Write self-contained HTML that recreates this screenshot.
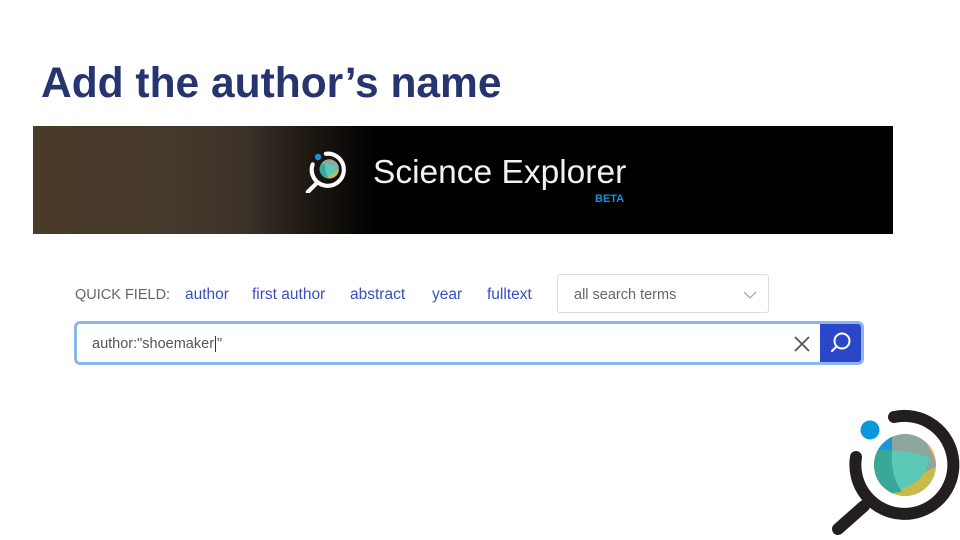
<!DOCTYPE html>
<html><head><meta charset="utf-8"><style>
body{margin:0;width:960px;height:540px;background:#fff;position:relative;overflow:hidden;font-family:"Liberation Sans",sans-serif}
.t{position:absolute;left:41px;top:60px;font-size:42.5px;font-weight:bold;color:#263570;white-space:nowrap}
.banner{position:absolute;left:33px;top:126px;width:860px;height:108px;background:linear-gradient(90deg,#4a3a28 0%,#463a2c 15%,#3a3128 25%,#1a1510 33%,#000 40%,#000 100%)}
.st{position:absolute;left:373px;top:154px;color:#f2f2f2;font-size:33.5px;white-space:nowrap}
.beta{position:absolute;left:595px;top:193px;color:#1a8fe0;font-size:11px;font-weight:bold}
.qf{position:absolute;top:286px;font-size:14.5px;white-space:nowrap}
.lbl{left:75px;color:#666;top:287px}
.lk{color:#3a4fc0;font-size:15.5px}
.sel{position:absolute;left:557px;top:274px;width:212px;height:39px;border:1px solid #ddd;border-radius:3px;box-sizing:border-box}
.sel span{position:absolute;left:16px;top:12px;font-size:14.5px;color:#666}
.inp{position:absolute;left:74px;top:321px;width:790px;height:44px;border:3px solid #8bb8ec;border-radius:6px;box-sizing:border-box;background:#fff}
.inp span{position:absolute;left:15px;top:12px;font-size:14.5px;color:#555}
.btn{position:absolute;right:0;top:0;width:41px;height:38px;background:#2b46c8;border-radius:0 3px 3px 0}
</style></head><body>
<div class="t">Add the author’s name</div>
<div class="banner"></div>
<svg style="position:absolute;left:302px;top:148px" width="45" height="45" viewBox="0 0 140 140">
<defs><clipPath id="g2"><circle cx="85" cy="65" r="30"/></clipPath></defs>
<g clip-path="url(#g2)">
<rect x="50" y="30" width="80" height="80" fill="#8ea6a0"/>
<path d="M105 40 L125 40 L125 80 Z" fill="#f2a455"/>
<path d="M125 62 L125 110 L70 110 L70 90 Z" fill="#c8bb4c"/>
<path d="M55 55 Q75 45 110 58 Q105 80 85 88 Q60 95 55 80Z" fill="#5cc8b6"/>
<path d="M50 52 Q62 48 72 50 Q70 75 82 92 L50 95Z" fill="#3aa898"/>
</g>
<path d="M74 18 A50 50 0 1 1 33 51" fill="none" stroke="#fff" stroke-width="13" stroke-linecap="round"/>
<line x1="18" y1="137" x2="44" y2="111" stroke="#fff" stroke-width="13" stroke-linecap="round"/>
<circle cx="50" cy="28" r="10" fill="#1a8fe0"/>
</svg>
<div class="st">Science Explorer</div>
<div class="beta">BETA</div>
<div class="qf lbl">QUICK FIELD:</div>
<div class="qf lk" style="left:185px">author</div>
<div class="qf lk" style="left:252px">first author</div>
<div class="qf lk" style="left:350px">abstract</div>
<div class="qf lk" style="left:432px">year</div>
<div class="qf lk" style="left:487px">fulltext</div>
<div class="sel"><span>all search terms</span>
<svg style="position:absolute;left:185px;top:16px" width="14" height="8"><path d="M1 1 L7 7 L13 1" fill="none" stroke="#aaa" stroke-width="1.3"/></svg></div>
<div class="inp"><span>author:"shoemaker<span style="position:static;border-left:1.5px solid #333;margin:0 1px"></span>"</span>
<svg style="position:absolute;left:717px;top:12px" width="16" height="16"><path d="M1 1 L15 15 M15 1 L1 15" stroke="#555" stroke-width="1.8"/></svg>
<div class="btn"><svg width="41" height="38"><circle cx="22" cy="17" r="7.5" fill="none" stroke="#fff" stroke-width="2"/><line x1="16.5" y1="22.5" x2="12" y2="27" stroke="#fff" stroke-width="2.2" stroke-linecap="round"/></svg></div>
</div>
<svg style="position:absolute;left:820px;top:400px" width="140" height="140" viewBox="0 0 140 140">
<defs><clipPath id="g"><circle cx="85" cy="65" r="31"/></clipPath></defs>
<g clip-path="url(#g)">
<rect x="50" y="30" width="80" height="80" fill="#8ea6a0"/>
<rect x="50" y="30" width="22" height="30" fill="#1996d8"/>
<path d="M105 40 L125 40 L125 80 Z" fill="#f2a455"/>
<path d="M125 62 L125 110 L70 110 L70 90 Z" fill="#c8bb4c"/>
<path d="M60 90 L95 110 L55 110Z" fill="#8cc44a"/>
<path d="M55 55 Q75 45 110 58 Q105 80 85 88 Q60 95 55 80Z" fill="#5cc8b6"/>
<path d="M50 52 Q62 48 72 50 Q70 75 82 92 L50 95Z" fill="#3aa898"/>
</g>
<path d="M74 17 A49 49 0 1 1 36 57" fill="none" stroke="#231f20" stroke-width="12" stroke-linecap="round"/>
<line x1="18" y1="129" x2="44" y2="106" stroke="#231f20" stroke-width="12" stroke-linecap="round"/>
<circle cx="50" cy="30" r="9.5" fill="#0a98dc"/>
</svg>
</body></html>
